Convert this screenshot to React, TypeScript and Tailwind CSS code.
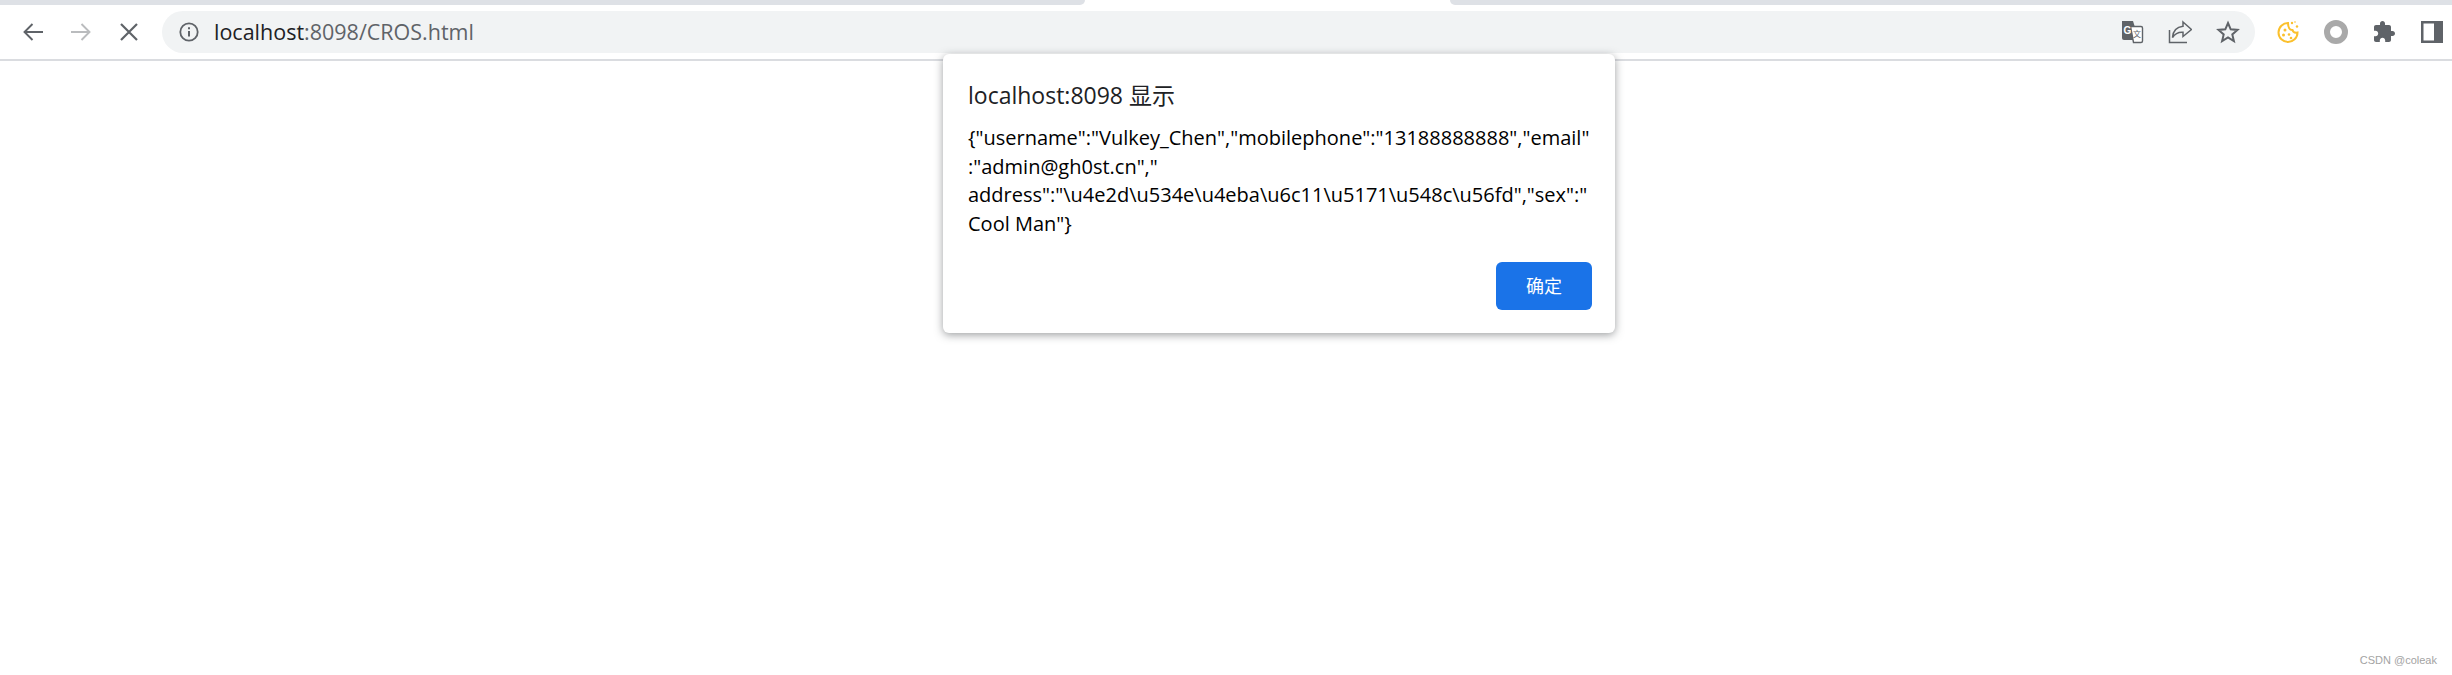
const uiFont = "font-['Open_Sans','Noto_Sans_CJK_SC',sans-serif]";

function BackIcon() {
  return (
    <svg width="24" height="24" viewBox="0 0 24 24" fill="none" stroke="#5f6368" strokeWidth="1.9">
      <path d="M22 12H3.5M11.5 4l-8 8 8 8" />
    </svg>
  );
}

function ForwardIcon() {
  return (
    <svg width="24" height="24" viewBox="0 0 24 24" fill="none" stroke="#babcbe" strokeWidth="1.9">
      <path d="M2 12h18.5M12.5 4l8 8-8 8" />
    </svg>
  );
}

function StopIcon() {
  return (
    <svg width="24" height="24" viewBox="0 0 24 24" fill="none" stroke="#5f6368" strokeWidth="2.2">
      <path d="M4 4l16 16M20 4L4 20" />
    </svg>
  );
}

function InfoIcon() {
  return (
    <svg width="20" height="20" viewBox="0 0 20 20" fill="none" stroke="#5f6368">
      <circle cx="10" cy="10" r="8.7" strokeWidth="1.8" />
      <path d="M10 9v5.6" strokeWidth="2" />
      <path d="M10 5.2v2" strokeWidth="2" />
    </svg>
  );
}

function TranslateIcon() {
  return (
    <svg width="24" height="24" viewBox="0 0 24 24">
      <path d="M2 1h11l6 19H4a2 2 0 0 1-2-2z" fill="#5f6368" />
      <path d="M10.5 6.5H21a1.5 1.5 0 0 1 1.5 1.5v13a1.5 1.5 0 0 1-1.5 1.5h-7.5z" fill="#fff" stroke="#5f6368" strokeWidth="1.4" />
      <text x="3.5" y="13.5" fontSize="10" fontWeight="700" fontFamily="Liberation Sans" fill="#fff">G</text>
      <text x="13" y="17" fontSize="8" fontFamily="Noto Sans CJK SC" fill="#5f6368">文</text>
    </svg>
  );
}

function ShareIcon() {
  return (
    <svg width="24" height="24" viewBox="0 0 24 24" fill="none" stroke="#5f6368" strokeWidth="1.5">
      <path d="M1.5 10v12.5h17.5" />
      <path d="M15 2l8.5 7.5-8.5 7v-4.2c-4.5-.3-8 1.300-10.500 5.200C5 11.500 8.500 7 15 6.300z" />
    </svg>
  );
}

function StarIcon() {
  return (
    <svg width="24" height="24" viewBox="0 0 24 24" fill="none" stroke="#5f6368" strokeWidth="2" strokeLinejoin="miter">
      <path d="M12 3l2.700 6.300 6.800.6-5.200 4.500 1.600 6.700L12 17.500l-5.900 3.600 1.600-6.700-5.200-4.500 6.800-.6z" />
    </svg>
  );
}

function CookieIcon() {
  return (
    <svg width="24" height="24" viewBox="0 0 24 24" fill="none" stroke="#fbc02d" strokeWidth="2">
      <path d="M12 3C7 3 2.500 7 2.500 12.500S7 22 12 22s9.500-4 9.500-9.500c-2.500.5-4.500-.5-5-2.500-2.500.3-4.500-2-4.500-7z" />
      <g fill="#fbc02d" stroke="none">
        <circle cx="9" cy="10" r="1.500" />
        <circle cx="7.500" cy="15" r="1.500" />
        <circle cx="13" cy="14.500" r="1.300" />
        <circle cx="15" cy="18" r="1.300" />
        <circle cx="16" cy="3" r="1.200" />
        <circle cx="21" cy="6.500" r="1.200" />
        <circle cx="19" cy="2" r="0.800" />
      </g>
    </svg>
  );
}

function RingIcon() {
  return (
    <svg width="24" height="24" viewBox="0 0 24 24" fill="none" stroke="#a9a9a9" strokeWidth="6">
      <circle cx="12" cy="12" r="9" />
    </svg>
  );
}

function PuzzleIcon() {
  return (
    <svg width="24" height="24" viewBox="0 0 24 24" fill="#5f6368">
      <path d="M20.500 11H19V7c0-1.100-.9-2-2-2h-4V3.500C13 2.120 11.880 1 10.500 1S8 2.120 8 3.500V5H4c-1.100 0-1.990.9-1.990 2v3.800H3.500c1.490 0 2.700 1.210 2.700 2.700s-1.210 2.700-2.700 2.700H2V20c0 1.100.9 2 2 2h3.800v-1.500c0-1.490 1.210-2.700 2.700-2.700 1.490 0 2.700 1.210 2.700 2.700V22H17c1.100 0 2-.9 2-2v-4h1.500c1.380 0 2.500-1.120 2.500-2.500S21.880 11 20.500 11z" />
    </svg>
  );
}

function SidePanelIcon() {
  return (
    <svg width="24" height="24" viewBox="0 0 24 24">
      <path fillRule="evenodd" d="M1 1h22v22H1zM3.500 3.500v17H14v-17z" fill="#5f6368" />
    </svg>
  );
}

const messageLines = [
  '{"username":"Vulkey_Chen","mobilephone":"13188888888","email"',
  ':"admin@gh0st.cn","',
  'address":"\\u4e2d\\u534e\\u4eba\\u6c11\\u5171\\u548c\\u56fd","sex":"',
  'Cool Man"}',
];

export default function App() {
  return (
    <div className={`relative h-[675px] overflow-hidden bg-white ${uiFont}`}>
      {/* tab strip */}
      <div className="flex h-[5px]">
        <div className="w-[1085px] rounded-br-md bg-[#dee1e6]" />
        <div className="w-[365px] bg-white" />
        <div className="flex-1 rounded-bl-md bg-[#dee1e6]" />
      </div>

      {/* toolbar */}
      <div className="flex h-[56px] items-center border-b-2 border-[#dadce0] pl-[9px]">
        <div className="flex w-[48px] justify-center"><BackIcon /></div>
        <div className="flex w-[48px] justify-center"><ForwardIcon /></div>
        <div className="flex w-[48px] justify-center"><StopIcon /></div>
        <div className="ml-[9px] flex h-[42px] flex-1 items-center rounded-full bg-[#f1f3f4] pl-[17px] pr-[15px]">
          <InfoIcon />
          <div className="ml-[15px] text-[21.500px] text-[#5f6368]">
            <span className="text-[#202124]">localhost</span>:8098/CROS.html
          </div>
          <div className="ml-auto flex gap-[24px]">
            <TranslateIcon />
            <ShareIcon />
            <StarIcon />
          </div>
        </div>
        <div className="ml-[13px] flex gap-[8px]">
          <div className="flex w-[40px] justify-center"><CookieIcon /></div>
          <div className="flex w-[40px] justify-center"><RingIcon /></div>
          <div className="flex w-[40px] justify-center"><PuzzleIcon /></div>
          <div className="flex w-[40px] justify-center"><SidePanelIcon /></div>
        </div>
      </div>

      {/* alert dialog */}
      <div className="absolute left-[943px] top-[54px] h-[279px] w-[672px] rounded-md bg-white pl-[25px] pr-[23px] pt-[25px] shadow-[0_2px_8px_rgba(60,64,67,0.5)]">
        <div className="text-[23px] leading-[32px] text-[#202124]">localhost:8098 显示</div>
        <div className="mt-[13px] text-[20px] leading-[28.500px] text-black">
          {messageLines.map((line) => (
            <div key={line} className="whitespace-nowrap">{line}</div>
          ))}
        </div>
        <div className="mt-[24px] flex justify-end">
          <button className="h-[48px] w-[96px] rounded-md bg-[#1a73e8] text-[18px] text-white">确定</button>
        </div>
      </div>

      <div className="absolute bottom-[7px] right-[15px] font-['Liberation_Sans',sans-serif] text-[11px] text-[#a3a3a3]">CSDN @coleak</div>
    </div>
  );
}
